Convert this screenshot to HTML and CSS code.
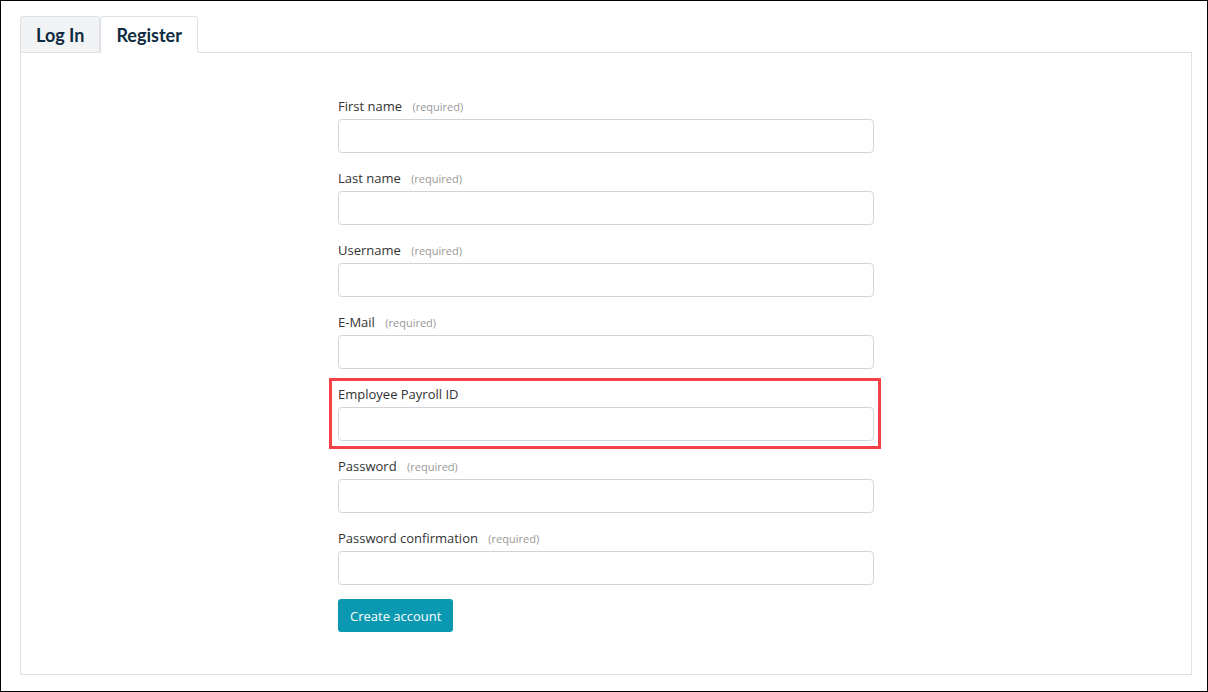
FILE: index.html
```html
<!DOCTYPE html>
<html lang="en">
<head>
    <meta charset="UTF-8">
    <title>Register</title>
    <link rel="stylesheet" href="styles.css">
</head>
<body>
    <div class="frame">
        <div class="tabs">
            <a class="tab" href="#">Log In</a>
            <a class="tab active" href="#">Register</a>
        </div>
        <div class="panel">
            <form class="register-form">
                <div class="field">
                    <label for="first">First name <span class="req">(required)</span></label>
                    <input type="text" id="first">
                </div>
                <div class="field">
                    <label for="last">Last name <span class="req">(required)</span></label>
                    <input type="text" id="last">
                </div>
                <div class="field">
                    <label for="user">Username <span class="req">(required)</span></label>
                    <input type="text" id="user">
                </div>
                <div class="field">
                    <label for="mail">E-Mail <span class="req">(required)</span></label>
                    <input type="text" id="mail">
                </div>
                <div class="field highlight">
                    <label for="payroll">Employee Payroll ID</label>
                    <input type="text" id="payroll">
                </div>
                <div class="field">
                    <label for="pass">Password <span class="req">(required)</span></label>
                    <input type="password" id="pass">
                </div>
                <div class="field">
                    <label for="pass2">Password confirmation <span class="req">(required)</span></label>
                    <input type="password" id="pass2">
                </div>
                <button type="submit">Create account</button>
            </form>
        </div>
    </div>
</body>
</html>
```

FILE: styles.css
```css
* {
    box-sizing: border-box;
}
body {
    margin: 0;
    font-family: "Open Sans", Lato, sans-serif;
    background-color: #ffffff;
}
.frame {
    width: 1208px;
    height: 692px;
    border: 1px solid #000;
    padding: 15px 15px 16px 19px;
    display: flex;
    flex-direction: column;
}
.tabs {
    display: flex;
    height: 37px;
    position: relative;
    z-index: 1;
}
.tab {
    display: block;
    height: 37px;
    padding: 0 15px;
    line-height: 36px;
    font-family: Lato, sans-serif;
    font-weight: bold;
    font-size: 18px;
    color: #0f2b40;
    text-decoration: none;
    background-color: #f2f3f5;
    border: 1px solid #dee2e6;
    border-radius: 3px 3px 0 0;
}
.tab.active {
    background-color: #ffffff;
    border-bottom-color: #ffffff;
}
.panel {
    flex: 1;
    margin-top: -1px;
    border: 1px solid #dee2e6;
    padding-top: 43px;
    display: flex;
    justify-content: center;
}
.register-form {
    width: 536px;
}
.field {
    margin-bottom: 15px;
}
.field.highlight {
    position: relative;
}
.field.highlight::after {
    content: "";
    position: absolute;
    top: -6px;
    left: -9px;
    right: -7px;
    bottom: -8px;
    border: 3px solid #f44147;
}
label {
    display: block;
    height: 20px;
    font-size: 13px;
    line-height: 20px;
    color: #333;
    margin-bottom: 3px;
}
.req {
    font-size: 11px;
    line-height: 1;
    color: #999;
    margin-left: 7px;
}
input {
    display: block;
    width: 100%;
    height: 34px;
    border: 1px solid #ced4da;
    border-radius: 4px;
    padding: 6px 12px;
    font-size: 14px;
}
button {
    display: block;
    height: 33px;
    margin-top: -1px;
    padding: 0 12px;
    border: none;
    border-radius: 3px;
    background-color: #0b99b2;
    color: #ffffff;
    font-family: "Open Sans", sans-serif;
    font-size: 13px;
    cursor: pointer;
}
```
